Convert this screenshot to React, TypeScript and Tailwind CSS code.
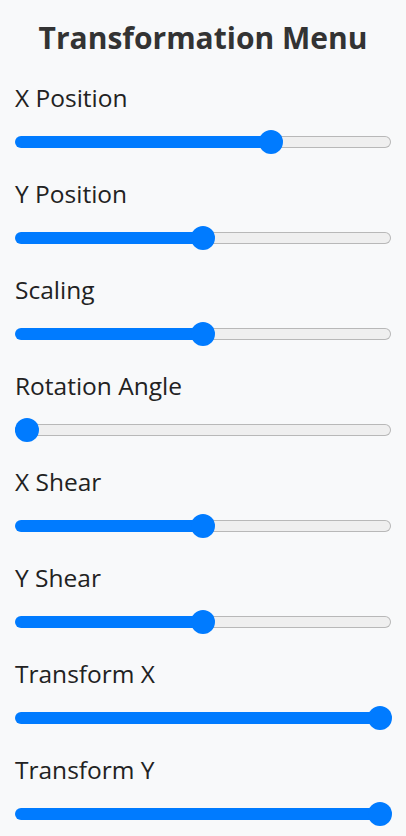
import React from "react";

const sliders: { label: string; value: number }[] = [
  { label: "X Position", value: 0.694 },
  { label: "Y Position", value: 0.5 },
  { label: "Scaling", value: 0.5 },
  { label: "Rotation Angle", value: 0 },
  { label: "X Shear", value: 0.5 },
  { label: "Y Shear", value: 0.5 },
  { label: "Transform X", value: 1 },
  { label: "Transform Y", value: 1 },
];

function Slider({ value }: { value: number }) {
  const fill = `calc(11.5px + ${value} * (100% - 23px))`;
  return (
    <div className="flex h-[24px] w-full items-center">
      <div className="h-[12px] shrink-0 rounded-l-full bg-[#007bff]" style={{ width: fill }} />
      <div className="relative z-10 -mx-[12px] h-[24px] w-[24px] shrink-0 rounded-full bg-[#007bff]" />
      <div className="h-[12px] min-w-0 flex-1 rounded-r-full border border-l-0 border-[#b8b8b8] bg-[#efefef]" />
    </div>
  );
}

export default function App() {
  return (
    <div
      className="min-h-[836px] w-full bg-[#f8f9fa] px-[15px] pt-[17px]"
      style={{ fontFamily: '"Open Sans", sans-serif' }}
    >
      <h1 className="text-center text-[30px] font-bold leading-[42px] text-[#333333]">
        Transformation Menu
      </h1>
      <div className="mt-[23px] flex flex-col">
        {sliders.map((s) => (
          <div key={s.label} className="flex h-[96px] flex-col">
            <div className="text-[24.5px] leading-[32px] text-[#222222]">{s.label}</div>
            <div className="mt-[16px]">
              <Slider value={s.value} />
            </div>
          </div>
        ))}
      </div>
    </div>
  );
}
